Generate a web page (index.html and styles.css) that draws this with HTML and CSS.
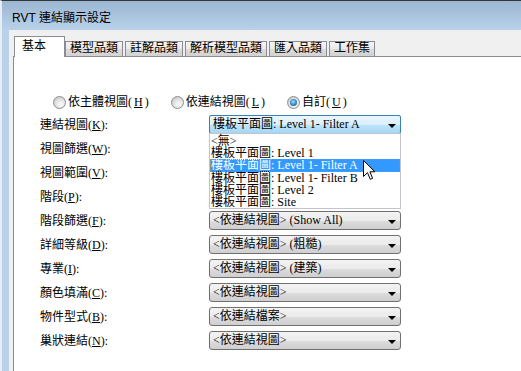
FILE: index.html
```html
<!DOCTYPE html>
<html lang="zh-Hant">
<head>
    <meta charset="UTF-8">
    <title>RVT 連結顯示設定</title>
    <link rel="stylesheet" href="styles.css">
</head>
<body>
<div class="window">
    <div class="titlebar">RVT 連結顯示設定</div>
    <div class="client">
        <div class="tabs">
            <div class="tab active">基本</div>
            <div class="tab">模型品類</div>
            <div class="tab">註解品類</div>
            <div class="tab">解析模型品類</div>
            <div class="tab">匯入品類</div>
            <div class="tab">工作集</div>
        </div>
        <div class="panel">
            <div class="radios">
                <span class="radio"><i class="dot"></i>依主體視圖(<u>H</u>)</span>
                <span class="radio"><i class="dot"></i>依連結視圖(<u>L</u>)</span>
                <span class="radio"><i class="dot checked"></i>自訂(<u>U</u>)</span>
            </div>
            <div class="form">
                <div class="row">
                    <span class="label">連結視圖(<u>K</u>):</span>
                    <div class="combo-wrap">
                        <div class="combo focus"><span class="value">樓板平面圖: Level 1- Filter A</span><i class="arrow"></i></div>
                        <ul class="list">
                            <li>&lt;無&gt;</li>
                            <li>樓板平面圖: Level 1</li>
                            <li class="hl">樓板平面圖: Level 1- Filter A</li>
                            <li>樓板平面圖: Level 1- Filter B</li>
                            <li>樓板平面圖: Level 2</li>
                            <li>樓板平面圖: Site</li>
                        </ul>
                        <svg class="cursor" width="13" height="21" viewBox="0 0 13 21">
                            <path d="M0.5 0.5 L0.5 16.5 L4.5 12.7 L7.3 19.3 L9.6 18.3 L6.9 11.8 L12 11.8 Z" fill="#fff" stroke="#000" stroke-width="1" stroke-linejoin="miter"/>
                        </svg>
                    </div>
                </div>
                <!-- these three are covered by the open list -->
                <div class="row">
                    <span class="label">視圖篩選(<u>W</u>):</span>
                    <div class="combo"><i class="arrow"></i></div>
                </div>
                <div class="row">
                    <span class="label">視圖範圍(<u>V</u>):</span>
                    <div class="combo"><i class="arrow"></i></div>
                </div>
                <div class="row">
                    <span class="label">階段(<u>P</u>):</span>
                    <div class="combo"><i class="arrow"></i></div>
                </div>
                <div class="row">
                    <span class="label">階段篩選(<u>F</u>):</span>
                    <div class="combo"><span class="value">&lt;依連結視圖&gt; (Show All)</span><i class="arrow"></i></div>
                </div>
                <div class="row">
                    <span class="label">詳細等級(<u>D</u>):</span>
                    <div class="combo"><span class="value">&lt;依連結視圖&gt; (粗糙)</span><i class="arrow"></i></div>
                </div>
                <div class="row">
                    <span class="label">專業(<u>I</u>):</span>
                    <div class="combo"><span class="value">&lt;依連結視圖&gt; (建築)</span><i class="arrow"></i></div>
                </div>
                <div class="row">
                    <span class="label">顏色填滿(<u>C</u>):</span>
                    <div class="combo"><span class="value">&lt;依連結視圖&gt;</span><i class="arrow"></i></div>
                </div>
                <div class="row">
                    <span class="label">物件型式(<u>B</u>):</span>
                    <div class="combo"><span class="value">&lt;依連結檔案&gt;</span><i class="arrow"></i></div>
                </div>
                <div class="row">
                    <span class="label">巢狀連結(<u>N</u>):</span>
                    <div class="combo"><span class="value">&lt;依連結視圖&gt;</span><i class="arrow"></i></div>
                </div>
            </div>
        </div>
    </div>
</div>
</body>
</html>
```

FILE: styles.css
```css
* {
    margin: 0;
    padding: 0;
    box-sizing: border-box;
}
html, body {
    width: 521px;
    height: 371px;
    overflow: hidden;
    background: #b9d1ea;
}
.window {
    width: 521px;
    height: 371px;
    display: flex;
    flex-direction: column;
    border-top: 1px solid #353535;
    border-left: 2px solid #e6edf4;
    padding-left: 7px;
    background: linear-gradient(to bottom, #9bb6d2 0, #b9d2ea 29px, #b9d1ea 100%);
    font-family: "Liberation Serif", "Noto Sans CJK TC", serif;
    font-size: 12px;
    color: #000;
    text-autospace: no-autospace;
    text-spacing-trim: space-all;
}
.titlebar {
    height: 29px;
    flex: none;
    display: flex;
    align-items: center;
    padding: 2px 0 0 3px;
    font-family: "Liberation Sans", "Noto Sans CJK TC", sans-serif;
    font-size: 12px;
    color: #000;
}
.client {
    flex: 1;
    display: flex;
    flex-direction: column;
    background: #f0f0f0;
    padding: 6px 0 0 4px;
}
.tabs {
    display: flex;
    align-items: flex-end;
    height: 20px;
    padding-left: 1px;
    position: relative;
    z-index: 1;
}
.tab {
    height: 15px;
    line-height: 13px;
    padding: 0 4px;
    margin-right: 2px;
    border: 1px solid #898c95;
    border-bottom: none;
    background: linear-gradient(to bottom, #f5f5f5 0, #e9e9e9 50%, #dcdcdc 51%, #d2d2d2 100%);
    white-space: nowrap;
}
.tab.active {
    width: 51px;
    height: 21px;
    margin-bottom: -1px;
    margin-right: 0;
    padding: 1px 0 0 7px;
    line-height: 16px;
    background: #fff;
}
.panel {
    flex: 1;
    background: #fff;
    border-top: 1px solid #898c95;
    border-left: 1px solid #898c95;
    padding-left: 26px;
}
.radios {
    display: flex;
    align-items: center;
    gap: 22px;
    height: 14px;
    margin: 38px 0 0 13px;
    line-height: 14px;
}
.radio {
    display: flex;
    align-items: center;
    gap: 2px;
    white-space: nowrap;
}
.dot {
    width: 13px;
    height: 13px;
    border-radius: 50%;
    border: 1px solid #8d8d8d;
    background: radial-gradient(circle at 62% 68%, #fbfbfb 0, #e4e4e4 45%, #bdbdbd 100%);
    position: relative;
}
.dot.checked::after {
    content: "";
    position: absolute;
    left: 2px;
    top: 2px;
    width: 7px;
    height: 7px;
    border-radius: 50%;
    background: radial-gradient(circle at 45% 40%, #a8e4ff 0, #3d95d6 45%, #0c4373 100%);
}
.form {
    display: flex;
    flex-direction: column;
    gap: 5px;
    margin-top: 6px;
}
.row {
    display: flex;
    align-items: center;
    height: 19px;
}
.label {
    width: 169px;
    line-height: 14px;
    white-space: nowrap;
}
.combo-wrap {
    position: relative;
    width: 192px;
    height: 19px;
}
.combo {
    width: 192px;
    height: 19px;
    display: flex;
    align-items: center;
    justify-content: space-between;
    padding: 0 4px 0 3px;
    border: 1px solid #707070;
    border-radius: 3px;
    background: linear-gradient(to bottom, #f3f3f3 0, #ebebeb 50%, #dddddd 51%, #cfcfcf 100%);
    line-height: 15px;
    white-space: nowrap;
}
.combo .arrow:only-child {
    margin-left: auto;
}
.combo.focus {
    border-color: #3c7fb1;
    border-radius: 2px;
    background: linear-gradient(to bottom, #eaf6fd 0, #d9f0fc 50%, #bee6fd 51%, #a4d6f3 100%);
}
.arrow {
    width: 0;
    height: 0;
    margin-top: 2px;
    border-left: 4px solid transparent;
    border-right: 4px solid transparent;
    border-top: 4px solid #000;
}
.list {
    position: absolute;
    left: 0;
    top: 18px;
    width: 192px;
    height: 76px;
    list-style: none;
    background: #fff;
    border: 1px solid #c2c3cf;
    padding-top: 1px;
    z-index: 2;
}
.list li {
    height: 12px;
    line-height: 12px;
    padding-left: 1px;
    white-space: nowrap;
}
.list li.hl {
    height: 13px;
    background: #3399ff;
    color: #fff;
    outline: 1px dotted #d47f2a;
    outline-offset: -1px;
}
.cursor {
    position: absolute;
    left: 154px;
    top: 45px;
    z-index: 3;
}
```
